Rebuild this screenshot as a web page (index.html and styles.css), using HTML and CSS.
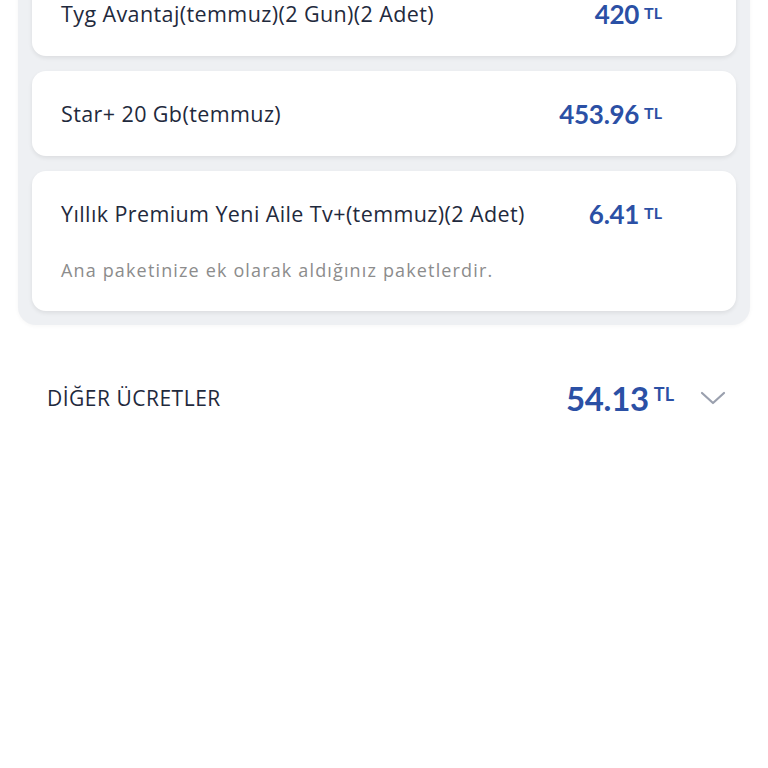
FILE: index.html
```html
<!DOCTYPE html>
<html lang="tr">
<head>
    <meta charset="UTF-8">
    <meta name="viewport" content="width=device-width, initial-scale=1.0">
    <title>Fatura Detayı</title>
    <link rel="stylesheet" href="styles.css">
</head>
<body>

    <div class="paketler">
        <div class="kart">
            <div class="satir">
                <span class="ad">Tyg Avantaj(temmuz)(2 Gun)(2 Adet)</span>
                <span class="tutar">420<small>TL</small></span>
            </div>
        </div>
        <div class="kart">
            <div class="satir">
                <span class="ad">Star+ 20 Gb(temmuz)</span>
                <span class="tutar">453.96<small>TL</small></span>
            </div>
        </div>
        <div class="kart">
            <div class="satir">
                <span class="ad">Yıllık Premium Yeni Aile Tv+(temmuz)(2 Adet)</span>
                <span class="tutar">6.41<small>TL</small></span>
            </div>
            <p class="aciklama">Ana paketinize ek olarak aldığınız paketlerdir.</p>
        </div>
    </div>

    <div class="diger">
        <span class="baslik">DİĞER ÜCRETLER</span>
        <span class="tutar buyuk">54.13<small>TL</small></span>
        <svg class="ok" width="26" height="14" viewBox="0 0 26 14">
            <path d="M2 2 L13 12 L24 2" fill="none" stroke="#9aa0ae" stroke-width="2.2" stroke-linecap="round" stroke-linejoin="round"/>
        </svg>
    </div>

</body>
</html>
```

FILE: styles.css
```css
body {
    font-family: "Open Sans", "Noto Sans", sans-serif;
    margin: 0;
    background: #fff;
    color: #1f2a3d;
}
.paketler {
    margin: -43px 18px 0;
    padding: 14px;
    background: #eef0f3;
    border-radius: 0 0 18px 18px;
    box-shadow: 0 1px 4px rgba(0, 0, 0, 0.04);
    display: flex;
    flex-direction: column;
    gap: 15px;
}
.kart {
    background: #fff;
    border-radius: 14px;
    padding: 28px 74px 28px 29px;
    box-shadow: 0 2px 4px rgba(0, 0, 0, 0.08);
}
.satir {
    display: flex;
    justify-content: space-between;
    align-items: center;
    height: 29px;
}
.ad {
    font-size: 21.5px;
    letter-spacing: 0.4px;
}
.tutar {
    font-family: Lato, "Open Sans", sans-serif;
    font-weight: bold;
    font-size: 26px;
    line-height: 26px;
    color: #2b50a5;
    display: flex;
    align-items: flex-start;
    letter-spacing: -0.3px;
}
.tutar small {
    font-size: 16px;
    line-height: 16px;
    margin-left: 5px;
    margin-top: 4px;
    letter-spacing: 0;
}
.aciklama {
    margin: 30px 0 1px;
    font-size: 18px;
    line-height: 24px;
    letter-spacing: 1.15px;
    color: #8c8c8c;
}
.diger {
    display: flex;
    align-items: center;
    padding: 0 42px 0 47px;
    margin-top: 54px;
    height: 38px;
}
.baslik {
    font-size: 21px;
    letter-spacing: 0.5px;
    flex: 1;
}
.tutar.buyuk {
    font-size: 33px;
    line-height: 38px;
}
.tutar.buyuk small {
    font-size: 18px;
    line-height: 18px;
    margin-top: 6px;
}
.ok {
    margin-left: 26px;
}
```
